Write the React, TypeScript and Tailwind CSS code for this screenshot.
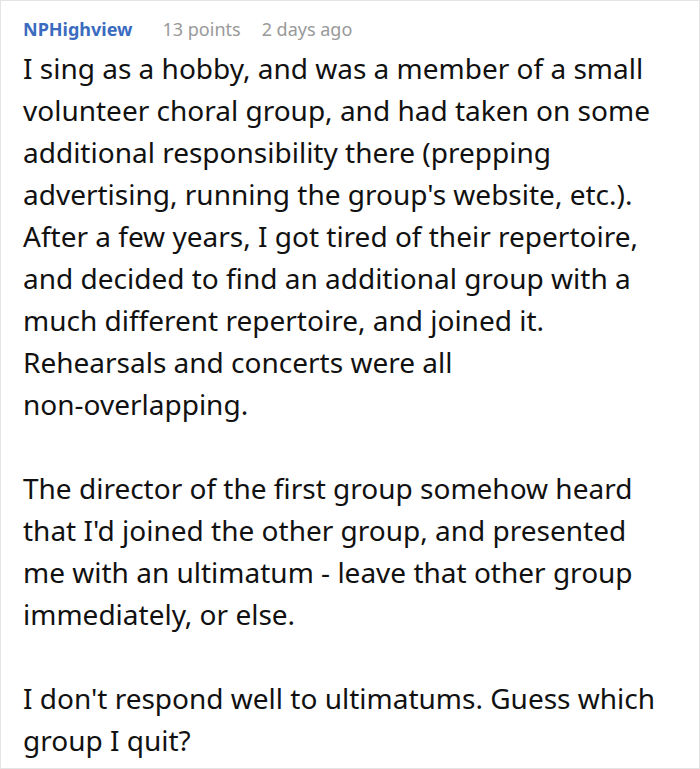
const App = () => {
  return (
    <div className="w-[700px] h-[769px] bg-white border border-[#e4e4e4] pl-[22px] pr-[35px] pt-[15px] font-['Noto_Sans',sans-serif]">
      {/* comment header */}
      <div className="flex items-baseline h-[27px] text-[18px] leading-[27px]">
        <span className="font-bold text-[#3a6bbf] mr-[30px]">NPHighview</span>
        <span className="text-[#999999] mr-[21px]">13 points</span>
        <span className="text-[#999999]">2 days ago</span>
      </div>

      {/* comment body */}
      <div className="mt-[4px] text-[28px] leading-[42px] text-[#111111]">
        <p>
          I sing as a hobby, and was a member of a small volunteer choral group, and had taken on some
          additional responsibility there (prepping advertising, running the group's website, etc.).
          After a few years, I got tired of their repertoire, and decided to find an additional group
          with a much different repertoire, and joined it. Rehearsals and concerts were all{" "}
          <span className="whitespace-nowrap">non-overlapping.</span>
        </p>
        <p className="mt-[42px]">
          The director of the first group somehow heard that I'd joined the other group, and presented
          me with an ultimatum - leave that other group immediately, or else.
        </p>
        <p className="mt-[42px]">I don't respond well to ultimatums. Guess which group I quit?</p>
      </div>
    </div>
  );
};

export default App;
